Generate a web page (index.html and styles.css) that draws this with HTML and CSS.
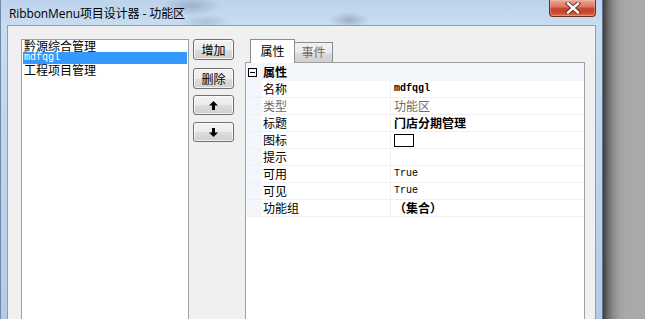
FILE: index.html
```html
<!DOCTYPE html>
<html>
<head>
<meta charset="utf-8">
<link rel="stylesheet" href="styles.css">
</head>
<body>
<div class="desktop">
  <div class="window">
    <div class="titlebar">
      <span class="title">RibbonMenu项目设计器 - 功能区</span>
      <div class="close">
        <svg width="16" height="12" viewBox="0 0 16 12">
          <path d="M3 1.5 L13 10.5 M13 1.5 L3 10.5" stroke="#5a2a24" stroke-width="4.2" stroke-linecap="square"/>
          <path d="M3 1.5 L13 10.5 M13 1.5 L3 10.5" stroke="#ffffff" stroke-width="2.4" stroke-linecap="square"/>
        </svg>
      </div>
    </div>
    <div class="client">
      <div class="listbox">
        <div class="item">黔源综合管理</div>
        <div class="item sel mono">mdfqgl</div>
        <div class="item">工程项目管理</div>
      </div>
      <div class="buttons">
        <button class="btn">增加</button>
        <button class="btn">删除</button>
        <button class="btn arrow">
          <svg width="9" height="9" viewBox="0 0 9 9"><path d="M4.5 0 L9 4.5 L6 4.5 L6 9 L3 9 L3 4.5 L0 4.5 Z" fill="#000"/></svg>
        </button>
        <button class="btn arrow">
          <svg width="9" height="9" viewBox="0 0 9 9"><path d="M4.5 9 L9 4.5 L6 4.5 L6 0 L3 0 L3 4.5 L0 4.5 Z" fill="#000"/></svg>
        </button>
      </div>
      <div class="tabctl">
        <div class="tabstrip">
          <div class="tab active">属性</div>
          <div class="tab">事件</div>
        </div>
        <div class="grid">
          <div class="cat">
            <span class="box"><span class="minus"></span></span>
            <span class="catname">属性</span>
          </div>
          <div class="row"><span class="gut"></span><span class="name">名称</span><span class="val mono bold">mdfqgl</span></div>
          <div class="row dim"><span class="gut"></span><span class="name">类型</span><span class="val">功能区</span></div>
          <div class="row"><span class="gut"></span><span class="name">标题</span><span class="val bold">门店分期管理</span></div>
          <div class="row"><span class="gut"></span><span class="name">图标</span><span class="val"><span class="iconbox"></span></span></div>
          <div class="row"><span class="gut"></span><span class="name">提示</span><span class="val"></span></div>
          <div class="row"><span class="gut"></span><span class="name">可用</span><span class="val mono">True</span></div>
          <div class="row"><span class="gut"></span><span class="name">可见</span><span class="val mono">True</span></div>
          <div class="row"><span class="gut"></span><span class="name">功能组</span><span class="val bold">（集合）</span></div>
        </div>
      </div>
    </div>
  </div>
  <div class="shadow"></div>
</div>
</body>
</html>
```

FILE: styles.css
```css
html, body {
  margin: 0;
  padding: 0;
}
body {
  width: 645px;
  height: 319px;
  overflow: hidden;
  background: #a9a9a9;
  font-family: "Noto Sans CJK SC", "Liberation Sans", sans-serif;
  font-size: 12px;
  color: #000;
}
.desktop {
  display: flex;
  height: 319px;
  overflow: hidden;
}
.window {
  width: 603px;
  height: 319px;
  flex: none;
  display: flex;
  flex-direction: column;
  padding: 0 6px;
  box-sizing: border-box;
  overflow: hidden;
  background:
    radial-gradient(ellipse 30px 10px at 190px 6px, rgba(90,110,140,0.35), transparent),
    radial-gradient(ellipse 25px 8px at 205px 22px, rgba(90,110,140,0.25), transparent),
    radial-gradient(ellipse 20px 8px at 348px 20px, rgba(80,95,120,0.35), transparent),
    linear-gradient(180deg, #bcd3eb 0px, #c9ddf1 25px, #c3d7ec 120px, #b5cbe4 319px);
  border-left: 1px solid #6f8bab;
  border-right: 1px solid #5f7390;
}
.titlebar {
  height: 25px;
  flex: none;
  display: flex;
  justify-content: space-between;
  align-items: flex-start;
}
.title {
  font-family: "Open Sans", "Noto Sans CJK SC", sans-serif;
  font-size: 12px;
  line-height: 16px;
  padding-top: 6px;
  padding-left: 2px;
  color: #000;
  letter-spacing: -0.1px;
}
.close {
  width: 47px;
  height: 17px;
  box-sizing: border-box;
  border: 1px solid #6b2e25;
  border-top: none;
  border-radius: 0 0 4px 4px;
  background: linear-gradient(180deg, #e9a899 0%, #dc7a63 40%, #c7432a 55%, #c94a2e 80%, #d9765a 100%);
  display: flex;
  align-items: center;
  justify-content: center;
  box-shadow: inset 0 0 0 1px rgba(255,200,190,0.35);
}
.client {
  flex: 1;
  min-height: 0;
  background: #f0f0f0;
  border: 1px solid #8c9db4;
  border-bottom: none;
  display: flex;
  align-items: stretch;
  padding: 13px 0 0 13px;
  overflow: hidden;
}
.listbox {
  width: 168px;
  box-sizing: border-box;
  background: #fff;
  border: 1px solid #a0a0a0;
  border-bottom: none;
  padding: 0 1px;
  flex: none;
}
.item {
  height: 12px;
  line-height: 12px;
  padding-left: 1px;
  white-space: nowrap;
}
.item.sel {
  background: #3399ff;
  color: #fff;
  line-height: 12px;
}
.mono {
  font-family: "Liberation Mono", monospace;
  font-size: 10px;
}
.buttons {
  margin-left: 4px;
  width: 41px;
  display: flex;
  flex-direction: column;
  flex: none;
}
.btn {
  width: 41px;
  height: 21px;
  margin: 0 0 8px 0;
  padding: 0;
  box-sizing: border-box;
  border: 1px solid #707070;
  border-radius: 3px;
  background: linear-gradient(180deg, #f2f2f2 0%, #ebebeb 50%, #dddddd 51%, #cfcfcf 100%);
  font-family: "Noto Sans CJK SC", sans-serif;
  font-size: 12px;
  line-height: 19px;
  color: #000;
  display: flex;
  align-items: center;
  justify-content: center;
  box-shadow: inset 0 0 0 1px rgba(255,255,255,0.7);
}
.btn:nth-child(2) { margin-bottom: 6px; }
.btn.arrow { height: 20px; margin-bottom: 7px; }
.tabctl {
  margin-left: 11px;
  width: 340px;
  flex: none;
  display: flex;
  flex-direction: column;
}
.tabstrip {
  display: flex;
  align-items: flex-end;
  padding-left: 5px;
  height: 23px;
  flex: none;
  position: relative;
  z-index: 1;
}
.tab {
  box-sizing: border-box;
  height: 20px;
  width: 39px;
  border: 1px solid #898c95;
  border-bottom: none;
  background: linear-gradient(180deg, #f2f2f2 0%, #ebebeb 50%, #dddddd 51%, #cfcfcf 100%);
  color: #6d6d6d;
  text-align: center;
  line-height: 18px;
  margin-left: -1px;
}
.tab.active {
  height: 24px;
  width: 45px;
  background: #fff;
  color: #000;
  line-height: 22px;
  margin-bottom: -1px;
  margin-left: 0;
  position: relative;
  z-index: 2;
}
.grid {
  flex: 1;
  box-sizing: border-box;
  border: 1px solid #a0a0a0;
  border-bottom: none;
  background: #fff;
}
.cat {
  height: 18px;
  background: #f3f6fb;
  display: flex;
  align-items: center;
}
.box {
  width: 9px;
  height: 9px;
  box-sizing: border-box;
  border: 1px solid #000;
  margin-left: 2px;
  display: flex;
  align-items: center;
  justify-content: center;
}
.minus {
  width: 5px;
  height: 1px;
  background: #000;
}
.catname {
  font-weight: bold;
  margin-left: 6px;
  line-height: 18px;
}
.row {
  display: flex;
  height: 17px;
  box-sizing: border-box;
  border-bottom: 1px solid #f0f0f0;
  line-height: 16px;
}
.gut {
  width: 16px;
  flex: none;
  background: #f3f6fb;
}
.name {
  width: 129px;
  flex: none;
  padding-left: 1px;
  box-sizing: border-box;
  border-right: 1px solid #f0f0f0;
}
.val {
  flex: 1;
  padding-left: 3px;
  white-space: nowrap;
  display: flex;
  align-items: center;
}
.dim .name, .dim .val { color: #6d6d6d; }
.bold { font-weight: bold; }
.iconbox {
  width: 20px;
  height: 13px;
  box-sizing: border-box;
  border: 1px solid #000;
  background: #fff;
}
.shadow {
  flex: 1;
  background: linear-gradient(90deg, #3e3e3e 0px, #6a6a6a 5px, #8f8f8f 11px, #a3a3a3 17px, #a9a9a9 24px);
}
```
